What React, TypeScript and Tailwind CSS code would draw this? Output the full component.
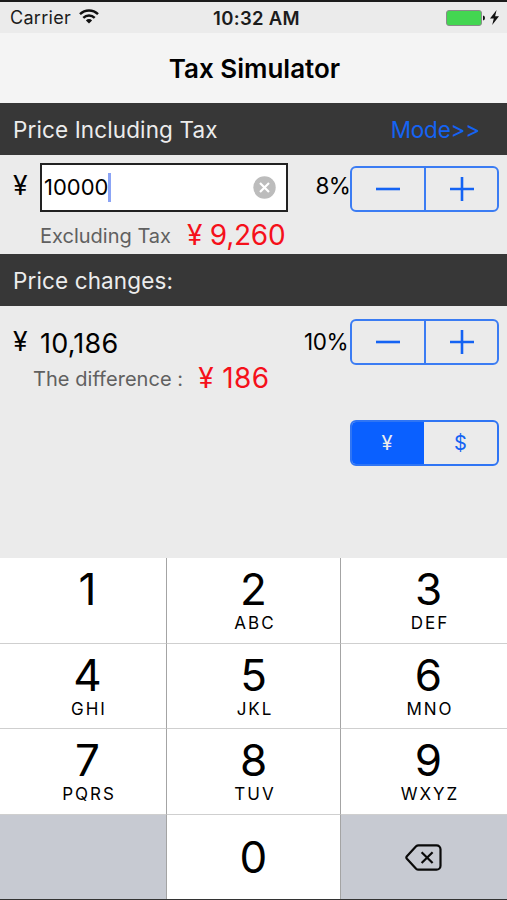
import clsx from "clsx"

const keys = [
  { digit: "1", letters: "" },
  { digit: "2", letters: "ABC" },
  { digit: "3", letters: "DEF" },
  { digit: "4", letters: "GHI" },
  { digit: "5", letters: "JKL" },
  { digit: "6", letters: "MNO" },
  { digit: "7", letters: "PQRS" },
  { digit: "8", letters: "TUV" },
  { digit: "9", letters: "WXYZ" },
]

function StatusBar() {
  return (
    <div className="grid h-[31px] grid-cols-3 items-center bg-[#ebebeb] text-[18px] leading-none text-[#1c1c1c]">
      <div className="flex items-center gap-[8px] pl-[10px]">
        <span className="pt-px tracking-[0.3px]">Carrier</span>
        <svg width="20" height="15" viewBox="0 0 20 15" className="-mt-0.5" fill="none" stroke="#111" strokeWidth="2.4">
          <path d="M1 5.2a12.8 12.8 0 0 1 18 0" />
          <path d="M4.3 8.8a8.1 8.1 0 0 1 11.4 0" />
          <path d="M6.9 11.4a4.4 4.4 0 0 1 6.2 0L10 14.6z" fill="#111" stroke="none" />
        </svg>
      </div>
      <div className="pt-px pl-[6px] text-center text-[18.5px] font-semibold tracking-[0.3px] whitespace-nowrap">
        10:32 AM
      </div>
      <div className="flex items-center justify-end gap-[5px] pr-[8px]">
        <svg width="39" height="16" viewBox="0 0 39 16">
          <rect x="0.5" y="0.5" width="35" height="15" rx="2.5" fill="#43d651" stroke="#8a8a8a" />
          <path d="M37 5.5q2 .4 2 2.5t-2 2.5z" fill="#111" />
        </svg>
        <svg width="9" height="15" viewBox="0 0 9 15">
          <path d="M6.6 0 0 8.4h3.8L2.2 15 9 6.3H5.1z" fill="#111" />
        </svg>
      </div>
    </div>
  )
}

function Stepper() {
  return (
    <div className="flex h-[46px] w-[149px] rounded-[6px] border-2 border-[#3b7cf3]">
      <button className="flex w-[74px] items-center justify-center border-r-2 border-[#3b7cf3]">
        <svg width="24" height="24" viewBox="0 0 24 24" stroke="#1463f3" strokeWidth="2.6">
          <path d="M0 12h24" />
        </svg>
      </button>
      <button className="flex flex-1 items-center justify-center">
        <svg width="24" height="24" viewBox="0 0 24 24" stroke="#1463f3" strokeWidth="2.6">
          <path d="M0 12h24M12 0v24" />
        </svg>
      </button>
    </div>
  )
}

function SectionHeader({ title, action }: { title: string; action?: string }) {
  return (
    <div className="flex h-[52px] items-center justify-between bg-[#373737] pt-[2px] pr-[27px] pl-[13px] text-[22.5px] leading-none text-[#ececec]">
      <h2 className="tracking-[0.12px]">{title}</h2>
      {action && <button className="tracking-[-0.2px] text-[#1463f3]">{action}</button>}
    </div>
  )
}

function Keypad() {
  return (
    <div className="grid grid-cols-[167px_174px_166px] grid-rows-[86px_85px_86px_84px] bg-white text-black">
      {keys.map((key, i) => (
        <button
          key={key.digit}
          className={clsx(
            "flex flex-col items-center border-b border-[#cfcfcf] pt-[8px]",
            i % 3 === 0 && "border-r border-r-[#a4a4a4] pl-[9px]",
            i % 3 === 1 && "border-r border-r-[#a4a4a4]",
            i % 3 === 2 && "pl-[9px]"
          )}
        >
          <span className="text-[44px] leading-[46px]">{key.digit}</span>
          <span className="mt-px pl-[3px] text-[17px] leading-[20px] tracking-[2px]">{key.letters}</span>
        </button>
      ))}
      <div className="border-r border-[#a4a4a4] bg-[#c7cad2]" />
      <button className="border-r border-[#a4a4a4] text-[44px] leading-none">0</button>
      <button className="flex items-center justify-center bg-[#c7cad2] pr-[2px]">
        <svg width="37" height="27" viewBox="0 0 37 27" fill="none" stroke="#0a0a0a" strokeWidth="2.2" strokeLinejoin="round">
          <path d="M13.5 1.3H31.5a4 4 0 0 1 4 4V21.7a4 4 0 0 1-4 4H13.5q-1.4 0-2.4-1L1.9 14.8q-1.1-1.3 0-2.6L11.1 2.3q1-1 2.4-1z" />
          <path d="m16.6 8.2 11 10.8M27.6 8.2l-11 10.8" />
        </svg>
      </button>
    </div>
  )
}

export default function App() {
  return (
    <div className="flex h-[900px] w-[507px] flex-col overflow-hidden border-t-2 border-b border-t-[#1c1c1c] border-b-[#333] bg-[#ebebeb] font-['Inter',sans-serif] text-black">
      <StatusBar />
      <header className="flex h-[70px] items-center justify-center bg-[#f4f4f4] pt-px pl-[2px]">
        <h1 className="text-[26px] leading-none font-semibold">Tax Simulator</h1>
      </header>

      <SectionHeader title="Price Including Tax" action="Mode>>" />
      <section className="h-[99px] pt-[8px]">
        <div className="flex h-[49px] pr-[8px] pl-[13px]">
          <span className="w-[27px] pt-[9px] text-[26.5px] leading-[26px]">¥</span>
          <div className="flex w-[248px] items-center border-2 border-[#222] bg-white pr-[10px] pl-[2px]">
            <span className="pb-[2px] text-[22px] leading-none">10000</span>
            <span className="h-[29px] w-[2.5px] bg-[#8ba4f5]" />
            <svg width="23" height="23" viewBox="0 0 23 23" className="ml-auto">
              <circle cx="11.5" cy="11.5" r="11.2" fill="#bcbcbc" />
              <path d="m7 7 9 9M16 7l-9 9" stroke="#fff" strokeWidth="2.2" />
            </svg>
          </div>
          <span className="ml-auto pt-[10px] text-[22.5px] leading-[26px] tracking-[-0.8px]">8%</span>
          <div className="pt-[3px]">
            <Stepper />
          </div>
        </div>
        <div className="flex h-[44px] items-center pl-[40px] leading-none">
          <span className="pt-[3px] text-[20px] text-[#606060]">Excluding Tax</span>
          <span className="ml-[16px] pt-px text-[28px] tracking-[-0.25px] text-[#f5101a]">¥ 9,260</span>
        </div>
      </section>

      <SectionHeader title="Price changes:" />
      <section className="flex-1 pt-[13px]">
        <div className="flex h-[46px] pr-[8px] pl-[13px]">
          <span className="w-[27px] pt-[9px] text-[26.5px] leading-[26px]">¥</span>
          <span className="pt-[12px] text-[27px] leading-[26px] tracking-[0.2px]">10,186</span>
          <span className="mr-[2px] ml-auto pt-[10px] text-[22.5px] leading-[26px] tracking-[-0.5px]">10%</span>
          <Stepper />
        </div>
        <div className="flex h-[26px] items-center pl-[33px] leading-none">
          <span className="pt-px text-[20px] tracking-[0.05px] text-[#606060]">The difference :</span>
          <span className="ml-[15px] text-[28px] tracking-[0.4px] text-[#f5101a]">¥ 186</span>
        </div>
        <div className="mt-[29px] mr-[8px] ml-auto flex h-[46px] w-[149px] overflow-hidden rounded-[6px] border-2 border-[#2f75f4] text-[20px] leading-none">
          <button className="w-[72px] bg-[#0a60ff] pr-[2px] text-[#ececec]">¥</button>
          <button className="flex-1 text-[#1463f3]">$</button>
        </div>
      </section>

      <Keypad />
    </div>
  )
}
